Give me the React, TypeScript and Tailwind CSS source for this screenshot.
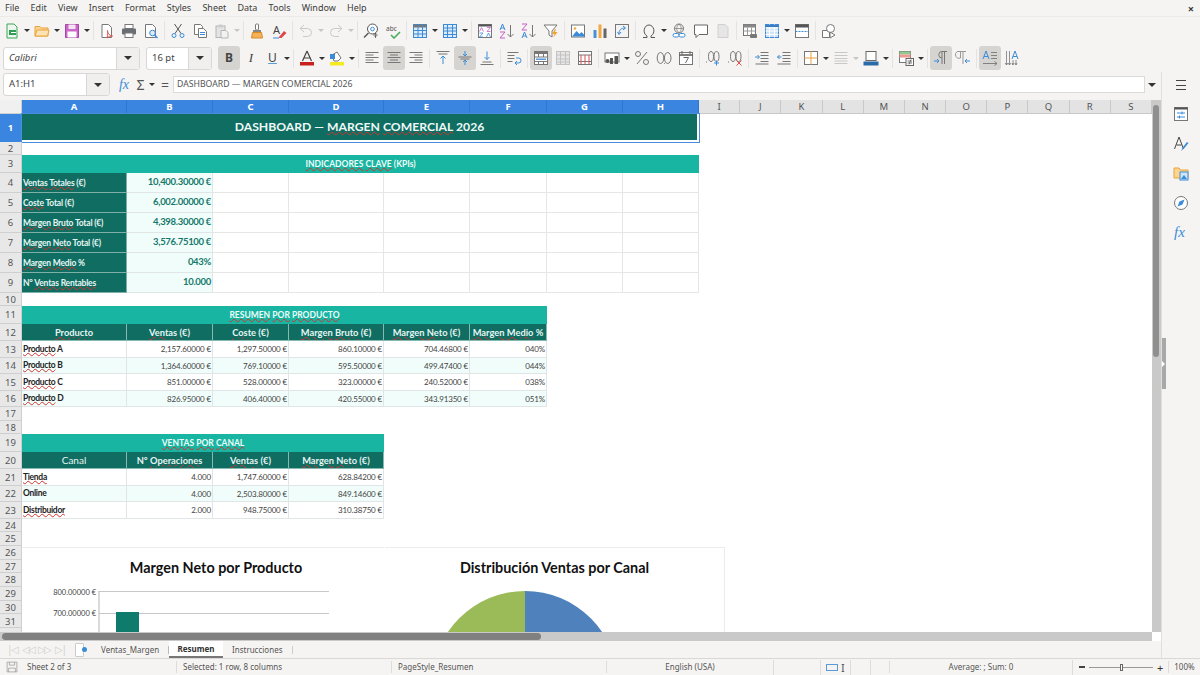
import { ReactNode } from "react"

const ui = "font-['Noto_Sans',sans-serif]"
const blue = "#3b8bd8"

// LibreOffice style toolbar icons, drawn on a 16 box
const icons: Record<string, ReactNode> = {
  new: (<><path d="M3 1h7l3 3v11H3z" fill="#eef7ef" stroke="#3aa655" /><rect x="5" y="7" width="7" height="5" fill="#2f9e54" /><path d="M7 9.500h5" stroke="#fff" /></>),
  open: (<><path d="M1 13V3.500h5L7.500 5H14v8z" fill="#fcd591" stroke="#e8a33d" /><path d="M1 13l2-6h12l-1.500 6z" fill="#fde3b3" stroke="#e8a33d" /></>),
  save: (<><path d="M1.500 1.500h13v13h-13z" fill="#c968c9" stroke="#a745a7" /><rect x="4.500" y="1.500" width="7" height="4.500" fill="#f6e3f6" /><rect x="3.500" y="8.500" width="9" height="6" fill="#fff" /></>),
  pdf: (<><path d="M3 1.500h6.500l3 3V14.500H3z" fill="#fff" stroke="#777" /><path d="M8 15c1-4 1-6 .5-7.500-.5 2 1.500 5 5 5.500-2 0-4 .5-5.500 2z" fill="none" stroke="#e0504a" /></>),
  print: (<><rect x="4" y="1.500" width="8" height="4" fill="#fff" stroke="#777" /><rect x="1" y="5.500" width="14" height="6" rx="1" fill="#6a6e73" /><rect x="4" y="10" width="8" height="4.500" fill="#fff" stroke="#777" /></>),
  preview: (<><path d="M2.500 1.500h7l3 3v10h-10z" fill="#fff" stroke="#777" /><circle cx="9.500" cy="10" r="2.800" fill="#dcecf9" stroke={blue} /><path d="M11.500 12l3 3" stroke={blue} strokeWidth="1.500" /></>),
  cut: (<><path d="M4.500 1l6.500 9.500M11.500 1L5 10.500" stroke="#555" /><circle cx="4" cy="12.500" r="2" stroke={blue} /><circle cx="12" cy="12.500" r="2" stroke={blue} /></>),
  copy: (<><path d="M2.500 1.500h6l2 2v8h-8z" fill="#fff" stroke="#777" /><path d="M6.500 5.500h5l3 3v6h-8z" fill="#fff" stroke="#777" /><path d="M8 9.500h5M8 11.500h5" stroke={blue} /></>),
  paste: (<><rect x="2" y="3" width="9" height="11.500" fill="#e4e4e4" stroke="#b5b5b5" /><rect x="4.500" y="1.500" width="4" height="3" fill="#ccc" /><path d="M7 7.500h5l2 2v5.500H7z" fill="#f2f2f2" stroke="#b5b5b5" /></>),
  clone: (<><rect x="6.500" y="1" width="3" height="6" rx="1" fill="#fff" stroke="#777" /><rect x="4" y="7" width="8" height="2.500" fill="#888" /><path d="M3.500 9.500h9l1 5.500h-11z" fill="#f4b15a" stroke="#d98a22" /></>),
  clear: (<><text x="2" y="11" fontSize="11" fill="#444" fontFamily="Noto Sans">A</text><path d="M8 14l5-6 2.500 2-5 5H8z" fill="#e0454a" /><path d="M2 15h6" stroke={blue} /></>),
  undo: (<path d="M2 5.500h7.500a4 4 0 010 8H5M2 5.500L6 2M2 5.500L6 9" stroke="#c9c9c9" />),
  redo: (<path d="M14 5.500H6.500a4 4 0 000 8H11M14 5.500L10 2M14 5.500L10 9" stroke="#c9c9c9" />),
  find: (<><circle cx="9.500" cy="6" r="5" fill="#fff" stroke="#555" /><path d="M5.500 10L1 14.500" stroke="#555" strokeWidth="1.500" /><circle cx="9.500" cy="6" r="1.800" stroke={blue} /><path d="M12.500 10v5M12.500 13.500a1.500 1.500 0 10-.1 0" stroke="#555" strokeWidth=".8" /></>),
  spell: (<><text x="1" y="7.500" fontSize="6.500" fill="#555" fontFamily="Noto Sans">abc</text><path d="M6 12l3 3 6-6" stroke="#45a85a" strokeWidth="1.500" /></>),
  grid: (<><rect x="1.500" y="1.500" width="13" height="13" fill="#dcecf9" stroke={blue} /><rect x="1.500" y="1.500" width="13" height="3" fill="#777" /><path d="M1.500 7.500h13M1.500 11h13M6 1.500v13M10.500 1.500v13" stroke={blue} /></>),
  table: (<><rect x="1.500" y="1.500" width="13" height="13" fill="#dcecf9" stroke={blue} /><path d="M1.500 5h13M1.500 8h13M1.500 11.500h13M5.500 1.500v13M10.500 1.500v13" stroke={blue} /></>),
  sort: (<><rect x="1.500" y="1.500" width="13" height="13" fill="#fff" stroke="#777" /><rect x="1.500" y="1.500" width="13" height="2" fill="#555" /><path d="M4.500 4.500l-2 4M4.500 4.500l2 4M10 4.500h3.500L10 8.500h3.500" stroke="#c75fc7" strokeWidth=".8" /><path d="M2.500 10h3.500L2.500 14h3.500M11.500 10l-2 4M11.500 10l2 4" stroke={blue} strokeWidth=".8" /></>),
  asc: (<><path d="M3.500 1L1 7M3.500 1L6 7M2 5h3" stroke={blue} /><path d="M1 9h5L1 15h5" stroke="#c75fc7" /><path d="M11.500 2v12M8.500 11l3 3 3-3" stroke="#777" /></>),
  desc: (<><path d="M1 1h5L1 7h5" stroke="#c75fc7" /><path d="M3.500 9L1 15M3.500 9L6 15M2 13h3" stroke={blue} /><path d="M11.500 2v12M8.500 11l3 3 3-3" stroke="#777" /></>),
  filter: (<><path d="M1 2h13L9 8v6l-3-2V8z" fill="#fff" stroke="#777" /><path d="M12 6l-3 5h2.500L10 15l4.500-6H12l1-3z" fill="#f2a230" /></>),
  image: (<><rect x="1.500" y="2" width="13" height="12" fill="#fff" stroke="#777" /><circle cx="5" cy="5.500" r="1.300" fill="#f4a73e" /><path d="M2 13.500L6.500 8l3 3 2-2 3 3v1.500z" fill={blue} /></>),
  chart: (<><rect x="1.500" y="7" width="3" height="8" fill="#4a90d9" /><rect x="6.500" y="1.500" width="3" height="13.500" fill="#f4a73e" /><rect x="11.500" y="5.500" width="3" height="9.500" fill="#666" /></>),
  pivot: (<><rect x="1.500" y="1.500" width="13" height="13" fill="#f3f3f3" stroke="#777" /><path d="M5 11c0-4 2-6 6-6M9 3l2.500 2L9 7M3.500 9L5 11.500 7 9" stroke={blue} /></>),
  omega: (<path d="M2 14.500h4v-1.500c-5-3-3-11 2-11s7 8 2 11v1.500h4" stroke="#555" />),
  link: (<><circle cx="8" cy="5.500" r="4.500" stroke="#777" /><path d="M3.500 5.500h9M8 1c-3 3-3 6 0 9M8 1c3 3 3 6 0 9" stroke="#777" strokeWidth=".7" /><rect x="2" y="10.500" width="6" height="3.500" rx="1.700" fill="#fff" stroke={blue} /><rect x="8" y="10.500" width="6" height="3.500" rx="1.700" fill="#fff" stroke={blue} /></>),
  comment: (<path d="M1.500 2h13v9.500H6L3 14.500v-3H1.500z" fill="#fff" stroke="#666" />),
  note: (<path d="M3 1.500h7l3 3v10H3z" fill="#e6e6e6" stroke="#d0d0d0" />),
  headers: (<><rect x="1.500" y="1.500" width="12" height="11" fill="#fff" stroke="#777" /><rect x="1.500" y="1.500" width="12" height="3" fill="#888" /><path d="M5.500 4.500v8M9.500 4.500v8M1.500 8h12" stroke="#999" /><rect x="8" y="11" width="7" height="4" rx="1" fill="#777" /></>),
  freeze: (<><rect x="1.500" y="1.500" width="13" height="13" fill="#cfe4f7" stroke={blue} /><path d="M1.500 5h13M1.500 8h13M1.500 11.500h13M5.500 1.500v13M10.500 1.500v13" stroke="#fff" /><path d="M1.500 3h13" stroke="#3b7dbf" strokeWidth="2" /></>),
  split: (<><rect x="1.500" y="1.500" width="13" height="13" fill="#fff" stroke="#777" /><rect x="1.500" y="1.500" width="13" height="3" fill="#555" /><path d="M1.500 8.500h13" stroke={blue} strokeDasharray="2 1" /></>),
  shapes: (<><path d="M1.500 7.500h7v7h-7z" fill="#fff" stroke="#777" /><circle cx="9.500" cy="5.500" r="4" fill="#fff" stroke="#777" /><path d="M9 9l5 3-5 3z" fill="#fff" stroke="#777" /></>),
  left: (<path d="M1.500 2.500h13M1.500 5h8M1.500 7.500h13M1.500 10h8M1.500 12.500h13" stroke="#777" />),
  center: (<path d="M1.500 2.500h13M4 5h8M1.500 7.500h13M4 10h8M1.500 12.500h13" stroke="#777" />),
  right: (<path d="M1.500 2.500h13M6.500 5h8M1.500 7.500h13M6.500 10h8M1.500 12.500h13" stroke="#777" />),
  vtop: (<><path d="M1.500 1.500h13M3.500 4h9" stroke="#777" /><path d="M8 14V6M5.500 8.500L8 6l2.500 2.500" stroke={blue} /></>),
  vmid: (<><path d="M1.500 7h13M3.500 9h9" stroke="#777" /><path d="M8 1v5M6 4l2 2 2-2M8 15v-5M6 12l2-2 2 2" stroke={blue} /></>),
  vbot: (<><path d="M1.500 14.500h13M3.500 12h9" stroke="#777" /><path d="M8 1.500V9.500M5.500 7L8 9.500 10.500 7" stroke={blue} /></>),
  wrap: (<><path d="M1.500 2.500h11M1.500 5.500h7M1.500 8.500h7M1.500 11.500h5" stroke="#777" /><path d="M10 8h2.500a2 2 0 010 5H9M11 11l-2 2 2 2" stroke={blue} /></>),
  merge: (<><rect x="1.500" y="1.500" width="13" height="13" fill="#fff" stroke="#777" /><rect x="1.500" y="1.500" width="13" height="2.500" fill="#777" /><path d="M1.500 7h13M1.500 11.500h13M5.500 4v3M10.500 4v3M5.500 11.500v3M10.500 11.500v3" stroke="#777" /><path d="M3 9.200h10" stroke={blue} strokeWidth="1.300" /></>),
  mergeoff: (<><rect x="1.500" y="1.500" width="13" height="13" fill="#e6e6e6" stroke="#c2c2c2" /><path d="M1.500 5h13M1.500 9h13M1.500 12h13M5.500 1.500v13M10.500 1.500v13" stroke="#c2c2c2" /></>),
  unmerge: (<><rect x="1.500" y="1.500" width="13" height="13" fill="#fff" stroke="#777" /><path d="M1.500 5h13M1.500 11.500h13" stroke="#777" /><path d="M4 5v9M8 5v9M12 5v9" stroke="#d9534f" /></>),
  currency: (<><rect x="1" y="3" width="14" height="9" fill="#fff" stroke="#777" /><rect x="6" y="8" width="3" height="6" fill="#555" /><rect x="10.500" y="6" width="3.500" height="8" fill="#555" /><circle cx="3.500" cy="11" r="2" fill="#555" /></>),
  percent: (<><circle cx="4" cy="4" r="2.500" stroke="#777" /><circle cx="12" cy="12" r="2.500" stroke="#777" /><path d="M13 2L3 14" stroke="#777" /></>),
  number: (<><ellipse cx="4.500" cy="8" rx="3.300" ry="5.500" stroke="#777" /><ellipse cx="11.700" cy="8" rx="3.300" ry="5.500" stroke="#777" /><path d="M8 13.500h.8" stroke="#777" /></>),
  date: (<><rect x="1.500" y="2.500" width="13" height="12" fill="#fff" stroke="#777" /><path d="M1.500 5h13" stroke="#555" strokeWidth="1.500" /><path d="M4 1v3M12 1v3M5.500 7.500h5l-3 5.500" stroke="#666" /></>),
  adddec: (<><path d="M1 12h1" stroke="#777" /><ellipse cx="6" cy="6.500" rx="2.500" ry="5" stroke="#777" /><ellipse cx="11.500" cy="6.500" rx="2.500" ry="5" stroke="#777" /><path d="M11.500 10.500v5M9 13h5" stroke={blue} /></>),
  deldec: (<><path d="M1 12h1" stroke="#777" /><ellipse cx="6" cy="6.500" rx="2.500" ry="5" stroke="#777" /><ellipse cx="11.500" cy="6.500" rx="2.500" ry="5" stroke="#777" /><path d="M9.500 10.500l5 5M14.500 10.500l-5 5" stroke="#e0504a" /></>),
  indent: (<><path d="M6.500 2.500h8M6.500 5.500h8M6.500 8.500h8M6.500 11.500h8M1.500 14h13" stroke="#777" /><path d="M1 7h4M3.500 5L5.500 7l-2 2" stroke={blue} /></>),
  outdent: (<><path d="M6.500 2.500h8M6.500 5.500h8M6.500 8.500h8M6.500 11.500h8M1.500 14h13" stroke="#777" /><path d="M5.500 7h-4M3.500 5L1.500 7l2 2" stroke={blue} /></>),
  borders: (<><rect x="1.500" y="1.500" width="13" height="13" fill="#fff" stroke="#777" /><path d="M8 1.500v13M1.500 8h13" stroke="#e8a33d" /></>),
  bstyle: (<path d="M1.500 2.500h13M1.500 5.500h13M1.500 8.500h13M1.500 11h13M1.500 13.500h13" stroke="#c8c8c8" strokeWidth="1.200" />),
  bcolor: (<><rect x="3" y="1.500" width="10" height="9" fill="#fff" stroke="#666" /><rect x="0.500" y="11.500" width="15" height="4" fill="#2a6aa8" /></>),
  cond: (<><rect x="1.500" y="1.500" width="11" height="11" fill="#fff" stroke="#777" /><rect x="1.500" y="1.500" width="11" height="3" fill="#8fc98f" /><rect x="1.500" y="4.500" width="11" height="3" fill="#ee9a92" /><rect x="8" y="8.500" width="7.500" height="7" fill="#fff" stroke="#666" /><path d="M9.500 11h4.500M9.500 13h4.500M13 9.500l-2 5" stroke="#555" strokeWidth=".8" /></>),
  ltr: (<><path d="M9 14V1.500h5M11.500 1.500V14M9 1.500a3 3 0 000 6.500" stroke="#777" fill="none" /><path d="M1 11h5M4 9l2 2-2 2" stroke={blue} /></>),
  rtl: (<><path d="M2 1.500h9M8 1.500V14M5.500 1.500V8a3 3 0 01-3-6.500" stroke="#999" /><path d="M15 11h-5M12 9l-2 2 2 2" stroke={blue} /></>),
  textltr: (<><path d="M4 1L1 9M4 1l3 8M2 6.500h4" stroke={blue} /><path d="M9 2.500h6M9 5.500h6M9 8.500h6M1 13.500h14M12.500 11.500l2.500 2-2.500 2" stroke="#777" strokeWidth=".9" /></>),
  textvert: (<><path d="M11 1L8 9M11 1l3 8M9 6.500h4" stroke={blue} /><path d="M2.500 1v14M5.500 1v14M1 13l1.500 2 1.500-2M4 13l1.500 2 1.500-2M9 10v5M12 10v5M8 13l1 2 1-2M11 13l1 2 1-2" stroke="#777" strokeWidth=".8" /></>),
  color: (<><path d="M8 1L3.500 11M8 1l4.500 10M5 8h6" stroke="#444" strokeWidth="1.200" /><rect x="1" y="12" width="14" height="3.500" fill="#c9211e" /></>),
  hilite: (<><path d="M3 5l5-3 4 6-3 3H5z" fill="#fff" stroke="#777" /><path d="M1 4h5v5H1z" fill={blue} /><rect x="1" y="12" width="14" height="3.500" fill="#f5ea20" /></>),
}

function Icon({ name, size = 16 }: { name: string; size?: number }) {
  return (
    <svg viewBox="0 0 16 16" width={size} height={size} fill="none" strokeWidth="1">
      {icons[name]}
    </svg>
  )
}

function Caret({ faded }: { faded?: boolean }) {
  return <span className={`h-0 w-0 border-x-[3px] border-t-[3px] border-x-transparent ${faded ? "border-t-[#c6c6c6]" : "border-t-[#333]"}`} />
}

// "+" after a name adds the dropdown arrow, "!" marks a pressed button
function Tools({ items }: { items: string[] }) {
  return (
    <>
      {items.map((raw, i) => {
        if (raw === "|")
          return (
            <span key={i} className="flex w-[5px] justify-center">
              <span className="h-[19px] w-px bg-[#e4e3e1]" />
            </span>
          )
        const name = raw.replace(/[+!~]/g, "")
        return (
          <span key={i} className="flex items-center">
            <span className={`flex h-[24px] w-[22px] items-center justify-center rounded-[3px] ${raw.includes("!") ? "bg-[#d6d4d1]" : ""}`}>
              <Icon name={name} />
            </span>
            {raw.includes("+") && (
              <span className="flex w-[8px] justify-center">
                <Caret faded={raw.includes("~")} />
              </span>
            )}
          </span>
        )
      })}
    </>
  )
}

const toolbar1 = ["new+", "open+", "save+", "|", "pdf", "print", "preview", "|", "cut", "copy", "paste+~", "|", "clone", "clear", "|", "undo+~", "redo+~", "|", "find", "spell", "|", "grid+", "table+", "|", "sort", "asc", "desc", "filter", "|", "image", "chart", "pivot", "|", "omega+", "link", "comment", "note", "|", "headers", "freeze+", "split", "|", "shapes"]
const toolbar2a = ["color+", "hilite+", "|", "left", "center!", "right", "|", "vtop", "vmid!", "vbot", "|", "wrap", "|", "merge!", "mergeoff", "unmerge", "|", "currency+", "percent", "number", "date", "|", "adddec", "deldec", "|", "indent", "outdent", "|", "borders+", "bstyle+~", "bcolor+", "|", "cond+", "|", "ltr!", "rtl", "|", "textltr!", "textvert"]

const menus = ["File", "Edit", "View", "Insert", "Format", "Styles", "Sheet", "Data", "Tools", "Window", "Help"]

function Combo({ value, box, arrow, italic }: { value: string; box: string; arrow: string; italic?: boolean }) {
  return (
    <div className={`flex h-[23px] rounded-[3px] border border-[#d8d7d5] bg-white ${box}`}>
      <span className={`flex flex-1 items-center pl-[5px] text-[9.5px] text-[#444] ${italic ? "italic" : ""}`}>{value}</span>
      <span className={`flex items-center justify-center border-l border-[#d8d7d5] bg-[#f0efed] ${arrow}`}>
        <span className="h-0 w-0 border-x-[4px] border-t-[4px] border-x-transparent border-t-[#333]" />
      </span>
    </div>
  )
}

const misspelled = new Set(["Ventas", "Totales", "Coste", "Margen", "Bruto", "Neto", "Medio", "Rentables", "Producto", "Tienda", "Distribuidor", "MARGEN", "COMERCIAL", "INDICADORES", "CLAVE", "RESUMEN", "POR", "PRODUCTO", "VENTAS", "CANAL", "Operaciones"])

function Words({ text }: { text: string }) {
  return (
    <span className="whitespace-pre">
      {text.split(" ").map((w, i) => (
        <span key={i}>
          {i > 0 && " "}
          <span className={misspelled.has(w) ? "underline decoration-[#d0342c] decoration-wavy decoration-[0.5px] underline-offset-0" : ""}>{w}</span>
        </span>
      ))}
    </span>
  )
}

function RowHead({ n, active, blank }: { n: number; active?: boolean; blank?: boolean }) {
  return (
    <div className={`col-start-1 flex items-center justify-center border-r border-b pt-[2px] text-[9.5px] ${ui} ${active ? "border-[#3a85e0] bg-[#3a85e0] font-bold text-white" : "border-[#cfcfcf] bg-[#e8e8e8] text-[#555]"}`}>
      {blank ? "" : n}
    </div>
  )
}

const colHeads = ["A", "B", "C", "D", "E", "F", "G", "H", "I", "J", "K", "L", "M", "N", "O", "P", "Q", "R", "S"]

const kpis = [
  ["Ventas Totales (€)", "10,400.30000 €"],
  ["Coste Total (€)", "6,002.00000 €"],
  ["Margen Bruto Total (€)", "4,398.30000 €"],
  ["Margen Neto Total (€)", "3,576.75100 €"],
  ["Margen Medio %", "043%"],
  ["N° Ventas Rentables", "10.000"],
]

const productos = [
  ["Producto A", "2,157.60000 €", "1,297.50000 €", "860.10000 €", "704.46800 €", "040%"],
  ["Producto B", "1,364.60000 €", "769.10000 €", "595.50000 €", "499.47400 €", "044%"],
  ["Producto C", "851.00000 €", "528.00000 €", "323.00000 €", "240.52000 €", "038%"],
  ["Producto D", "826.95000 €", "406.40000 €", "420.55000 €", "343.91350 €", "051%"],
]

const canales = [
  ["Tienda", "4.000", "1,747.60000 €", "628.84200 €"],
  ["Online", "4.000", "2,503.80000 €", "849.14600 €"],
  ["Distribuidor", "2.000", "948.75000 €", "310.38750 €"],
]

function Band({ n, span, text }: { n: number; span: string; text: string }) {
  return (
    <>
      <RowHead n={n} />
      <div className={`flex items-center justify-center bg-[#17b5a2] pt-px text-[8.5px] font-bold text-[#effbf8] ${span}`}>
        <Words text={text} />
      </div>
    </>
  )
}

function HeadRow({ n, cells }: { n: number; cells: string[] }) {
  return (
    <>
      <RowHead n={n} />
      {cells.map((c) => (
        <div key={c} className={`flex items-center justify-center border-r border-b border-[#85b8b0] bg-[#0f6d62] pt-px text-[#e6f5f2] ${c === "Canal" ? "text-[10px]" : "text-[9.3px] font-bold"}`}>
          <Words text={c} />
        </div>
      ))}
    </>
  )
}

function DataRows({ start, rows }: { start: number; rows: string[][] }) {
  return (
    <>
      {rows.map((r, i) => (
        <div key={r[0]} className="contents">
          <RowHead n={start + i} />
          {r.map((c, j) => (
            <div key={j} className={`flex items-center border-r border-b border-[#dfe6e5] px-px pt-px ${i % 2 ? "bg-[#f0fdfa]" : "bg-white"} ${j === 0 ? "text-[8.5px] font-bold tracking-[-0.3px] text-[#222]" : "justify-end text-[8px] tracking-[-0.15px] text-[#444]"}`}>
              {j === 0 ? <Words text={c} /> : c}
            </div>
          ))}
        </div>
      ))}
    </>
  )
}

function Grid() {
  return (
    <div className="grid grid-cols-[22px_105px_86px_76px_95px_86px_77px_76px_76px_repeat(11,1fr)] grid-rows-[14px_28px_13px_18px_repeat(6,20px)_13px_18px_17px_repeat(4,16.5px)_13.5px_13.5px_18px_17px_repeat(3,16.5px)_repeat(9,13.7px)] bg-white font-['Lato',sans-serif]">
      <div className="border-r border-b border-[#cfcfcf] bg-[#f0f0f0]" />
      {colHeads.map((c, i) => (
        <div key={c} className={`flex items-center justify-center border-r border-b pt-px text-[9.5px] ${ui} ${i < 8 ? "border-[#2f78d0] bg-[#3a85e0] font-bold text-white" : "border-[#c9c9c9] bg-[#e3e3e3] text-[#555]"}`}>
          {c}
        </div>
      ))}

      <RowHead n={1} active />
      <div className="col-span-8 flex items-center justify-center border-r-2 border-b-2 border-white bg-[#0f6d62] text-[12.2px] font-bold text-[#eef9f7] outline-1 outline-[#4a8ddc]">
        <Words text="DASHBOARD — MARGEN COMERCIAL 2026" />
      </div>

      <RowHead n={2} />
      <Band n={3} span="col-span-8" text="INDICADORES CLAVE (KPIs)" />

      {kpis.map(([label, value], i) => (
        <div key={label} className="contents">
          <RowHead n={4 + i} />
          <div className="flex items-center border-r border-b border-[#7fb0a8] bg-[#0f6d62] px-px pt-px text-[8.5px] font-bold tracking-[-0.2px] text-[#e6f5f2]">
            <Words text={label} />
          </div>
          <div className="flex items-center justify-end border-r border-b border-[#dfe6e5] bg-[#f0fdfa] px-px text-[9.5px] font-bold tracking-[-0.3px] text-[#15786b]">{value}</div>
          {["C", "D", "E", "F", "G", "H"].map((c) => (
            <div key={c} className="border-r border-b border-[#e6e6e6]" />
          ))}
        </div>
      ))}

      <RowHead n={10} />
      <Band n={11} span="col-span-6" text="RESUMEN POR PRODUCTO" />
      <HeadRow n={12} cells={["Producto", "Ventas (€)", "Coste (€)", "Margen Bruto (€)", "Margen Neto (€)", "Margen Medio %"]} />
      <DataRows start={13} rows={productos} />

      <RowHead n={17} />
      <RowHead n={18} />
      <Band n={19} span="col-span-4" text="VENTAS POR CANAL" />
      <HeadRow n={20} cells={["Canal", "N° Operaciones", "Ventas (€)", "Margen Neto (€)"]} />
      <DataRows start={21} rows={canales} />

      {[24, 25, 26, 27, 28, 29, 30, 31].map((n) => (
        <RowHead key={n} n={n} />
      ))}
      <RowHead n={32} blank />
    </div>
  )
}

function Charts() {
  return (
    <div className="absolute top-[447px] left-[22px] flex h-[90px] w-[703px] gap-px font-['Lato',sans-serif]">
      <div className="w-[362px] border-t border-[#ececec] bg-white">
        <div className="pt-[10px] pl-[26px] text-center text-[14.4px] leading-[19px] font-bold text-[#111]">Margen Neto por Producto</div>
        <svg width="361" height="60" className="mt-[8px]">
          <g fontSize="7.5" fill="#444" textAnchor="end" fontFamily="Lato">
            <text x="74" y="10">800.00000 €</text>
            <text x="74" y="31">700.00000 €</text>
          </g>
          <path d="M77 6.500H307M77 28.500H307" stroke="#c8c8c8" />
          <path d="M77 6v54" stroke="#b5b5b5" />
          <rect x="94" y="27" width="23" height="33" fill="#0f7b6c" />
        </svg>
      </div>
      <div className="w-[340px] border-t border-r border-[#ececec] bg-white">
        <div className="pt-[10px] text-center text-[14.4px] leading-[19px] font-bold text-[#111]">Distribución Ventas por Canal</div>
        <svg width="339" height="60" className="mt-[8px]">
          <path d="M140 99V6A93 93 0 01233 99Z" fill="#4f81bd" />
          <path d="M140 99V6A93 93 0 0047 99Z" fill="#9bbb59" />
        </svg>
      </div>
    </div>
  )
}

const sideIcons: ReactNode[] = [
  (<><rect x="1.500" y="1.500" width="13" height="13" fill="#fff" stroke="#777" /><rect x="1.500" y="1.500" width="13" height="2" fill="#555" /><path d="M4 7h8M4 11h8" stroke={blue} /><path d="M9 5.500v3M6.500 9.500v3" stroke={blue} /></>),
  (<><path d="M6 1L1.500 13M6 1l4.500 12M3.500 9h5" stroke="#444" /><path d="M8 15l2-4 4-5 1.500 1-4 5z" fill={blue} /></>),
  (<><path d="M1 13V3h5l1.500 2H15v8z" fill="#fcd591" stroke="#e8a33d" /><rect x="7" y="7" width="8" height="8" fill="#cfe4f7" stroke={blue} /><path d="M8 14l3-4 3 4z" fill={blue} /></>),
  (<><circle cx="8" cy="8" r="6.500" fill="#fff" stroke="#777" /><path d="M11.500 4.500L9.500 9.500 4.500 11.500 6.500 6.500z" fill={blue} /></>),
  (<text x="1" y="13" fontSize="15" fontStyle="italic" fill={blue} fontFamily="Liberation Serif">fx</text>),
]

export default function App() {
  return (
    <div className={`flex h-[675px] w-[1200px] flex-col overflow-hidden bg-[#f5f4f2] text-[#444] ${ui}`}>
      <div className="relative flex h-[17px] items-center gap-[11.2px] border-b border-[#eceae8] pl-[5px] text-[9px] text-[#3c3c3c]">
        {menus.map((m) => (
          <span key={m}>{m}</span>
        ))}
        <span className="absolute top-[1px] right-[6px] text-[11px] font-bold">×</span>
      </div>

      <div className="flex h-[27px] items-center pl-px">
        <Tools items={toolbar1} />
      </div>

      <div className="flex h-[28px] items-center">
        <div className="ml-[3px] flex gap-[6px]">
          <Combo value="Calibri" italic box="w-[137px]" arrow="w-[23px]" />
          <Combo value="16 pt" box="w-[66px]" arrow="w-[23px]" />
        </div>
        <span className="ml-[6px] flex h-[24px] w-[22px] items-center justify-center rounded-[3px] bg-[#d6d4d1] text-[12px] font-bold text-[#444]">B</span>
        <span className="flex w-[22px] justify-center font-['Liberation_Serif',serif] text-[13px] text-[#444] italic">I</span>
        <span className="flex w-[21px] justify-center text-[12px] text-[#444] underline decoration-[#5a9ad8]">U</span>
        <span className="flex w-[8px] justify-center"><Caret /></span>
        <span className="flex w-[5px] justify-center"><span className="h-[19px] w-px bg-[#e4e3e1]" /></span>
        <Tools items={toolbar2a} />
      </div>

      <div className="flex min-h-0 flex-1">
        <div className="flex w-[1162px] flex-col border-r border-[#e0dfdd]">
          <div className="flex h-[28px] items-center pb-[3px]">
            <div className="ml-[3px]">
              <Combo value="A1:H1" box="w-[107px]" arrow="w-[23px]" />
            </div>
            <span className="ml-[4px] w-[20px] text-center font-['Liberation_Serif',serif] text-[14px] text-[#3b8bd8] italic">fx</span>
            <span className="w-[13px] text-center text-[14px] text-[#555]">Σ</span>
            <span className="flex w-[10px] justify-center"><Caret /></span>
            <span className="ml-px w-[14px] text-center text-[14px] text-[#555]">=</span>
            <div className="ml-px flex h-[17px] w-[972px] items-center border border-[#dcdbd9] bg-white pl-[3px] text-[8.7px] text-[#555]">
              DASHBOARD — MARGEN COMERCIAL 2026
            </div>
            <span className="flex w-[14px] justify-center"><span className="h-0 w-0 border-x-[4px] border-t-[4px] border-x-transparent border-t-[#333]" /></span>
          </div>

          <div className="flex min-h-0 flex-1">
            <div className="relative w-[1152px] overflow-hidden bg-white">
              <Grid />
              <Charts />
            </div>
            <div className="w-[9px] bg-[#c9c9c9] pt-[5px] pl-px">
              <div className="h-[252px] w-[6px] rounded-full bg-[#8f8f8f]" />
            </div>
          </div>

          <div className="flex h-[9px]">
            <div className="w-[1152px] bg-[#c9c9c9] py-px pl-[2px]">
              <div className="h-full w-[539px] rounded-full bg-[#808080]" />
            </div>
            <div className="flex-1 bg-white" />
          </div>

          <div className="flex h-[17px] items-center text-[8px] text-[#555]">
            <div className="ml-[7px] flex w-[58px] items-center justify-between text-[10px] tracking-[-2px] text-[#d0d0d0]">
              <span>|◁</span><span>◁◁</span><span>▷▷</span><span>▷|</span>
            </div>
            <span className="mr-[6px] ml-[10px] flex h-[14px] w-[9px] items-center justify-end rounded-[1px] border border-[#ccc] bg-white">
              <span className="mr-[-4px] h-[5px] w-[5px] rounded-full bg-[#3b8bd8]" />
            </span>
            <span className="ml-[11px] w-[58px]">Ventas_Margen</span>
            <span className="ml-[9px] h-[8px] w-px bg-[#bbb]" />
            <span className="flex h-[17px] w-[54px] items-center justify-center border-b-2 border-[#777] bg-white font-bold text-[#333]">Resumen</span>
            <span className="ml-[9px] w-[49px]">Instrucciones</span>
            <span className="ml-[11px] h-[8px] w-px bg-[#ccc]" />
          </div>
        </div>

        <div className="relative flex w-[38px] flex-col items-center">
          <div className="mt-[8px] flex h-[10px] w-[10px] flex-col justify-between">
            <span className="h-px bg-[#444]" /><span className="h-px bg-[#444]" /><span className="h-px bg-[#444]" />
          </div>
          <div className="mt-[16px] flex flex-col gap-[13.5px]">
            {sideIcons.map((s, i) => (
              <svg key={i} viewBox="0 0 16 16" width="16" height="16" fill="none">
                {s}
              </svg>
            ))}
          </div>
          <div className="absolute top-[266px] left-0 flex h-[51px] w-[4px] items-center bg-[#a8a8a8]">
            <span className="h-0 w-0 border-y-[3px] border-l-[3px] border-y-transparent border-l-white" />
          </div>
        </div>
      </div>

      <div className="flex h-[17px] items-center border-t border-[#d9d8d6] text-[8px] text-[#555]">
        <div className="flex w-[176px] items-center pl-[6px]">
          <svg viewBox="0 0 16 16" width="12" height="12" fill="none">
            <path d="M1.500 1.500h13v13h-13z" stroke="#999" />
            <path d="M4.500 1.500v4h7v-4M3.500 14.500v-5h9v5" stroke="#999" />
          </svg>
          <span className="ml-[9px]">Sheet 2 of 3</span>
        </div>
        <div className="w-[215px] border-l border-[#dddcda] pl-[6px]">Selected: 1 row, 8 columns</div>
        <div className="w-[215px] border-l border-[#dddcda] pl-[6px]">PageStyle_Resumen</div>
        <div className="w-[167px] border-l border-[#dddcda] text-center">English (USA)</div>
        <div className="h-[15px] w-[47px] border-l border-[#dddcda]" />
        <div className="flex h-[15px] w-[30px] items-center gap-[3px] border-l border-[#dddcda] pl-[5px]">
          <span className="h-[7px] w-[12px] border border-[#5a9ad8]" />
          <span className="text-[11px] leading-none text-[#555]">I</span>
        </div>
        <div className="h-[15px] w-[20px] border-l border-[#dddcda]" />
        <div className="h-[15px] w-[19px] border-l border-[#dddcda]" />
        <div className="w-[183px] border-l border-[#dddcda] text-center">Average: ; Sum: 0</div>
        <div className="flex h-[15px] w-[96px] items-center border-l border-[#dddcda] pl-[6px]">
          <span className="h-[1.5px] w-[6px] bg-[#444]" />
          <span className="relative mx-[4px] flex h-px w-[64px] justify-center bg-[#999]">
            <span className="absolute top-[-3px] h-[7px] w-[3px] border border-[#666] bg-white" />
          </span>
          <span className="text-[11px] leading-none text-[#333]">+</span>
        </div>
        <div className="flex-1 border-l border-[#dddcda] text-center">100%</div>
      </div>
    </div>
  )
}
